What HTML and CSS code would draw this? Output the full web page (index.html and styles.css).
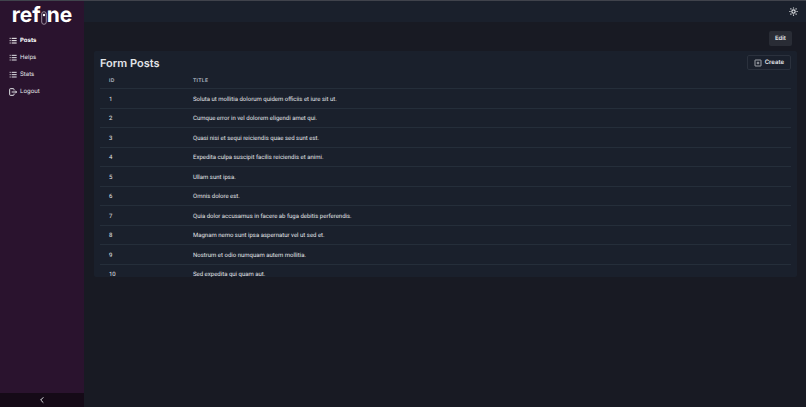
FILE: index.html
```html
<!DOCTYPE html>
<html lang="en">

<head>
    <meta charset="UTF-8">
    <meta name="viewport" content="width=device-width, initial-scale=1.0">
    <title>Form Posts</title>
    <link rel="stylesheet" href="styles.css">
</head>

<body>
    <aside class="sidebar">
        <a href="#" class="logo">
            <span>ref</span>
            <svg class="logo-mark" viewBox="0 0 6 14" aria-hidden="true">
                <rect x="0.7" y="0.7" width="4.6" height="12.6" rx="2.3" fill="none" stroke="#b5a9b8" stroke-width="0.8" />
                <circle cx="3" cy="4" r="1.2" fill="currentColor" />
            </svg>
            <span>ne</span>
        </a>
        <nav class="menu">
            <a href="#" class="menu-item active">
                <svg class="icon" viewBox="0 0 24 24"><path d="M2 4h3M8 4h15M2 11h3M8 11h15M2 18h3M8 18h15" /></svg>
                Posts
            </a>
            <a href="#" class="menu-item">
                <svg class="icon" viewBox="0 0 24 24"><path d="M2 4h3M8 4h15M2 11h3M8 11h15M2 18h3M8 18h15" /></svg>
                Helps
            </a>
            <a href="#" class="menu-item">
                <svg class="icon" viewBox="0 0 24 24"><path d="M2 4h3M8 4h15M2 11h3M8 11h15M2 18h3M8 18h15" /></svg>
                Stats
            </a>
            <a href="#" class="menu-item">
                <svg class="icon" viewBox="0 0 24 24"><path d="M15 7V4a2 2 0 0 0-2-2H4a2 2 0 0 0-2 2v16a2 2 0 0 0 2 2h9a2 2 0 0 0 2-2v-3M8 12h14M19 8l4 4-4 4" /></svg>
                Logout
            </a>
        </nav>
        <button class="collapse-button" aria-label="Collapse sidebar">
            <svg class="icon" viewBox="0 0 24 24"><path d="M16 4l-8 8 8 8" /></svg>
        </button>
    </aside>

    <div class="page">
        <header class="header">
            <button class="theme-button" aria-label="Toggle theme">
                <svg class="icon" viewBox="0 0 24 24"><circle cx="12" cy="12" r="4.5" /><path d="M12 1v3M12 20v3M1 12h3M20 12h3M4 4l2.300 2.300M17.700 17.700L20 20M4 20l2.300-2.300M17.700 6.300L20 4" /></svg>
            </button>
        </header>
        <main class="content">
            <div class="toolbar">
                <button class="edit-button">Edit</button>
            </div>
            <section class="card">
                <div class="card-header">
                    <h1>Form Posts</h1>
                    <button class="create-button">
                        <svg class="icon" viewBox="0 0 24 24"><rect x="3" y="3" width="18" height="18" rx="1" /><path d="M12 8v8M8 12h8" /></svg>
                        Create
                    </button>
                </div>
                <table class="posts">
                    <thead>
                        <tr><th class="col-id">ID</th><th>TITLE</th></tr>
                    </thead>
                    <tbody>
                        <tr><td>1</td><td>Soluta ut mollitia dolorum quidem officiis et iure sit ut.</td></tr>
                        <tr><td>2</td><td>Cumque error in vel dolorem eligendi amet qui.</td></tr>
                        <tr><td>3</td><td>Quasi nisi et sequi reiciendis quae sed sunt est.</td></tr>
                        <tr><td>4</td><td>Expedita culpa suscipit facilis reiciendis et animi.</td></tr>
                        <tr><td>5</td><td>Ullam sunt ipsa.</td></tr>
                        <tr><td>6</td><td>Omnis dolore est.</td></tr>
                        <tr><td>7</td><td>Quia dolor accusamus in facere ab fuga debitis perferendis.</td></tr>
                        <tr><td>8</td><td>Magnam nemo sunt ipsa aspernatur vel ut sed et.</td></tr>
                        <tr><td>9</td><td>Nostrum et odio numquam autem mollitia.</td></tr>
                        <tr><td>10</td><td>Sed expedita qui quam aut.</td></tr>
                    </tbody>
                </table>
            </section>
        </main>
    </div>
</body>

</html>
```
FILE: styles.css
```css
* {
    box-sizing: border-box;
}

body {
    display: flex;
    min-height: 100vh;
    margin: 0;
    border-top: 1px solid #40434c;
    background-color: #181a23;
    color: #e2e4e8;
    font-family: Inter, sans-serif;
    font-size: 6px;
    text-rendering: geometricPrecision;
}

a {
    color: inherit;
    text-decoration: none;
}

button {
    padding: 0;
    border: none;
    color: inherit;
    font-family: inherit;
    font-size: 6px;
    font-weight: 600;
    text-rendering: inherit;
    cursor: pointer;
}

.icon {
    display: block;
    width: 8px;
    height: 8px;
    fill: none;
    stroke: currentColor;
    stroke-width: 3;
}

.sidebar {
    display: flex;
    flex-direction: column;
    flex: 0 0 84px;
    background-color: #2a132e;
}

.logo {
    display: flex;
    align-items: center;
    justify-content: center;
    height: 31px;
    padding-bottom: 2px;
    color: #fff;
    font-size: 21px;
    font-weight: 700;
    line-height: 24px;
}

.logo-mark {
    width: 6px;
    height: 14px;
    margin-top: 4px;
}

.menu {
    flex: 1;
}

.menu-item {
    display: flex;
    align-items: center;
    gap: 3px;
    height: 17px;
    padding-left: 9px;
}

.menu-item.active {
    font-weight: 700;
    color: #fff;
}

.collapse-button {
    display: flex;
    align-items: center;
    justify-content: center;
    height: 14px;
    background-color: #150a17;
}

.page {
    flex: 1;
    min-width: 0;
}

.header {
    display: flex;
    align-items: center;
    justify-content: flex-end;
    height: 21px;
    padding-right: 8px;
    background-color: #1a202c;
}

.theme-button {
    background: none;
}

.theme-button .icon {
    width: 9px;
    height: 9px;
}

.content {
    padding: 9px 9px 9px 10px;
}

.toolbar {
    display: flex;
    justify-content: flex-end;
    padding: 0 5px 5px 0;
}

.edit-button {
    height: 15px;
    padding: 0 6px;
    border-radius: 2px;
    background-color: #292c35;
}

.card {
    max-height: 226px;
    padding: 4px 6px 0;
    border-radius: 2px;
    background-color: #1a202c;
    overflow: hidden;
}

.card-header {
    display: flex;
    align-items: center;
    justify-content: space-between;
}

h1 {
    margin: 0;
    font-size: 11px;
    font-weight: 600;
    line-height: 14px;
}

.create-button {
    display: flex;
    align-items: center;
    gap: 3px;
    height: 15px;
    padding: 0 6px;
    border: 1px solid #2b313d;
    border-radius: 2px;
    background: none;
}

.create-button .icon {
    stroke-width: 2;
}

.posts {
    width: 100%;
    border-collapse: collapse;
    font-family: Roboto, Inter, sans-serif;
}

.posts th,
.posts td {
    padding: 2px 9px 0;
    border-bottom: 1px solid #252e3a;
    text-align: left;
}

.posts th {
    height: 18px;
    padding-top: 5px;
    color: #a3abb8;
    font-family: Inter, sans-serif;
    font-size: 5px;
    font-weight: 700;
    letter-spacing: 0.05em;
}

.posts td {
    height: 20px;
}

.posts tr:nth-child(even) td {
    height: 19px;
}

.col-id {
    width: 84px;
}
```
